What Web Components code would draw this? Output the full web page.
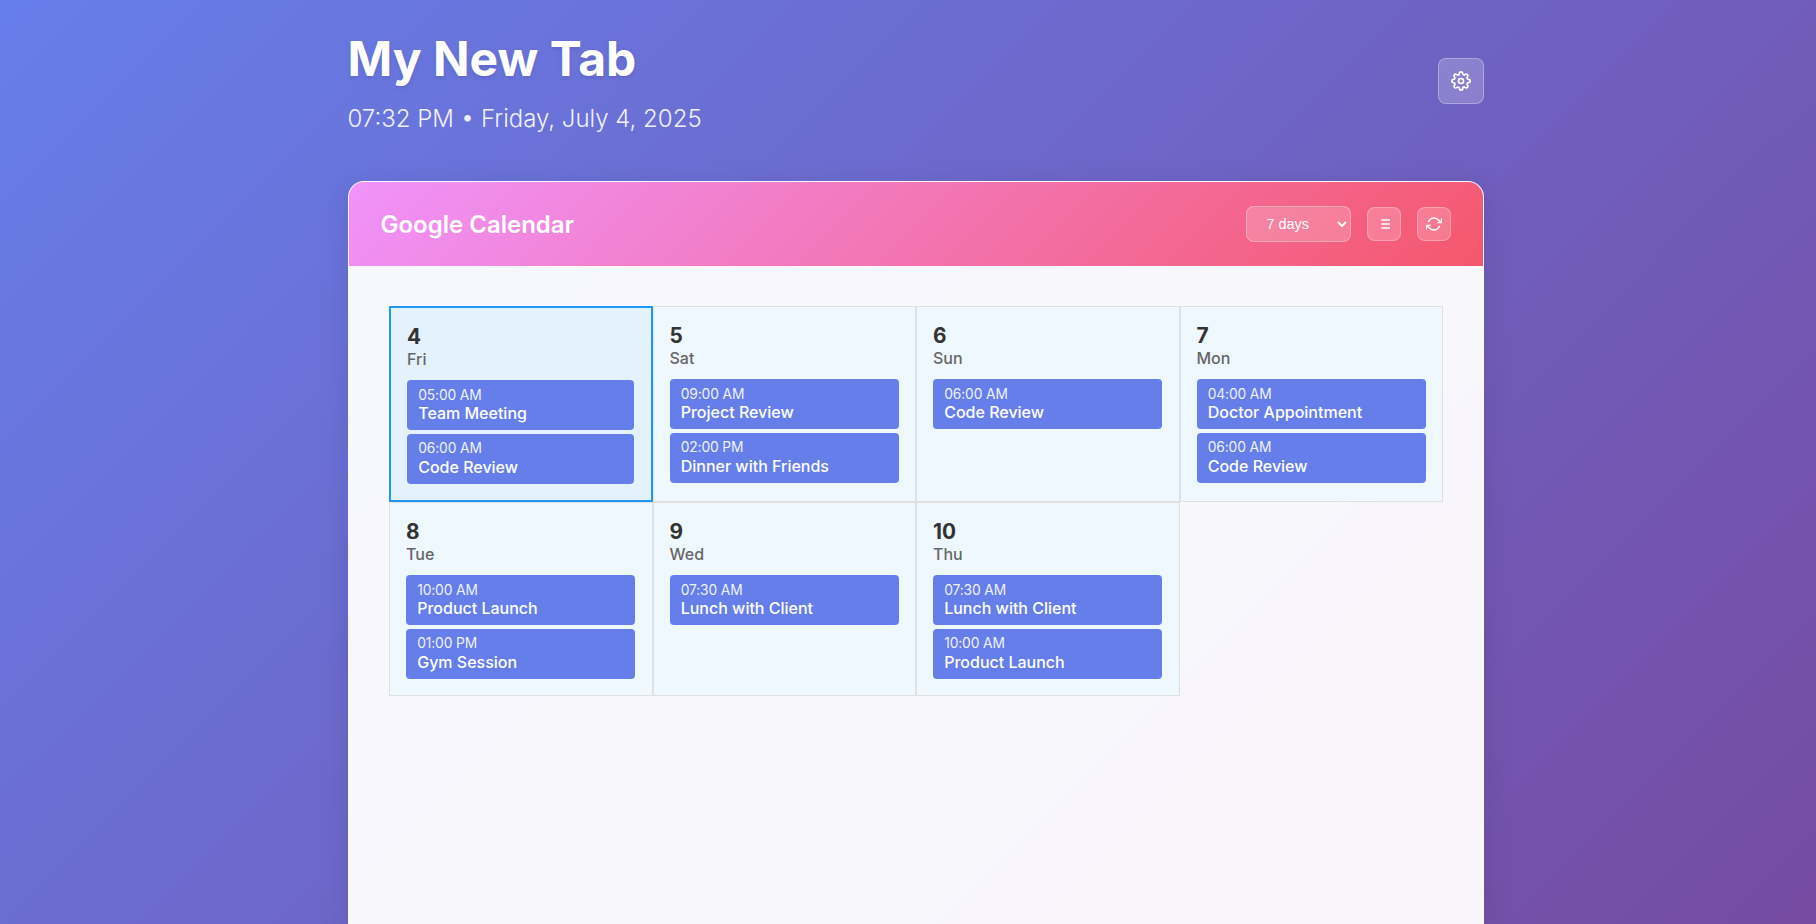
<!DOCTYPE html>
<html lang="en">
<head>
<meta charset="utf-8">
<title>My New Tab</title>
<style>
html{height:100%;background:linear-gradient(135deg,#667eea 0%,#764ba2 100%) fixed}
body{margin:0;height:100%;overflow:hidden;font-family:Inter,sans-serif;color:#333}
</style>
</head>
<body>
<new-tab-page></new-tab-page>
<script>
const define = (name, html, setup) => customElements.define(name, class extends HTMLElement {
  constructor() {
    super();
    const t = document.createElement('template');
    t.innerHTML = html;
    this.attachShadow({mode: 'open'}).append(t.content.cloneNode(true));
  }
  connectedCallback() { if (setup) setup.call(this, this.shadowRoot); }
});

define('icon-button', `
<style>
:host{display:flex;box-sizing:border-box;width:34px;height:34px;border:1px solid rgba(255,255,255,.3);border-radius:8px;background:rgba(255,255,255,.2);color:#fff;align-items:center;justify-content:center;cursor:pointer}
:host([large]){width:46px;height:46px}
</style>
<slot></slot>`);

define('page-header', `
<style>
:host{display:flex;justify-content:space-between;align-items:center;color:#fff}
h1{margin:0 0 16px;font-size:48px;line-height:58px;font-weight:700;text-shadow:0 2px 4px rgba(0,0,0,.1)}
p{margin:0;font-size:24px;line-height:29px;font-weight:300;opacity:.9}
icon-button{margin-bottom:2px}
svg{display:block}
</style>
<div><h1>My New Tab</h1><p>07:32 PM • Friday, July 4, 2025</p></div>
<icon-button large aria-label="Settings">
<svg width="20" height="20" viewBox="0 0 24 24" fill="none" stroke="#fff" stroke-width="2"><circle cx="12" cy="12" r="3"/><path d="M19.4 15a1.65 1.65 0 0 0 .33 1.82l.06.06a2 2 0 0 1 0 2.83 2 2 0 0 1-2.83 0l-.06-.06a1.65 1.65 0 0 0-1.82-.33 1.65 1.65 0 0 0-1 1.51V21a2 2 0 0 1-2 2 2 2 0 0 1-2-2v-.09A1.65 1.65 0 0 0 9 19.4a1.65 1.65 0 0 0-1.82.33l-.06.06a2 2 0 0 1-2.83 0 2 2 0 0 1 0-2.83l.06-.06a1.65 1.65 0 0 0 .33-1.82 1.65 1.65 0 0 0-1.51-1H3a2 2 0 0 1-2-2 2 2 0 0 1 2-2h.09A1.65 1.65 0 0 0 4.6 9a1.65 1.65 0 0 0-.33-1.82l-.06-.06a2 2 0 0 1 0-2.83 2 2 0 0 1 2.83 0l.06.06a1.65 1.65 0 0 0 1.82.33H9a1.65 1.65 0 0 0 1-1.51V3a2 2 0 0 1 2-2 2 2 0 0 1 2 2v.09a1.65 1.65 0 0 0 1 1.51 1.65 1.65 0 0 0 1.82-.33l.06-.06a2 2 0 0 1 2.83 0 2 2 0 0 1 0 2.83l-.06.06a1.65 1.65 0 0 0-.33 1.82V9a1.65 1.65 0 0 0 1.51 1H21a2 2 0 0 1 2 2 2 2 0 0 1-2 2h-.09a1.65 1.65 0 0 0-1.51 1z"/></svg>
</icon-button>`);

define('calendar-event', `
<style>
:host{display:block;box-sizing:border-box;height:49.8px;padding:6.2px 11.2px 0;border-radius:4px;background:#667eea;color:#fff}
.time{font-size:13.8px;line-height:16px;font-weight:400;letter-spacing:-.12px;opacity:.9;margin-bottom:.5px}
.title{font-size:16px;line-height:20px;font-weight:500}
</style>
<div class="time"></div><div class="title"><slot></slot></div>`,
function (root) { root.querySelector('.time').textContent = this.getAttribute('time'); });

define('calendar-day', `
<style>
:host{display:block;padding:16px;border:1px solid #e0e0e0;background:#f0f8ff}
:host([today]){border:2px solid #2196f3;background:#e3f2fd}
.num{font-size:20.8px;line-height:25px;font-weight:700;color:#333}
.name{font-size:16px;line-height:19px;font-weight:500;color:#666;margin:1px 0 11.4px}
.events{display:flex;flex-direction:column;gap:4px;margin-right:.1px}
</style>
<div class="num"></div><div class="name"></div><div class="events"><slot></slot></div>`,
function (root) {
  root.querySelector('.num').textContent = this.getAttribute('num');
  root.querySelector('.name').textContent = this.getAttribute('name');
});

define('calendar-toolbar', `
<style>
:host{display:flex;align-items:center;justify-content:space-between;padding:24px 32px;background:linear-gradient(135deg,#f093fb 0%,#f5576c 100%);color:#fff}
h2{margin:0;font-size:24px;line-height:29px;font-weight:600}
.controls{display:flex;align-items:center;gap:16px}
select{box-sizing:border-box;width:105px;height:36px;margin:0;padding:8px 0 8px 16px;border:1px solid rgba(255,255,255,.3);border-radius:8px;background:rgba(255,255,255,.2);color:#fff;font:14.4px "Liberation Sans",Arial,sans-serif}
svg{display:block}
</style>
<h2>Google Calendar</h2>
<div class="controls">
<select><option>7 days</option></select>
<icon-button aria-label="List view"><svg width="16" height="16" viewBox="0 0 24 24" fill="none" stroke="#fff" stroke-width="2"><path d="M8 6h13M8 12h13M8 18h13"/></svg></icon-button>
<icon-button aria-label="Refresh"><svg width="16" height="16" viewBox="0 0 24 24" fill="none" stroke="#fff" stroke-width="2"><path d="M23 4v6h-6M1 20v-6h6"/><path d="M3.51 9a9 9 0 0 1 14.85-3.36L23 10M1 14l4.64 4.36A9 9 0 0 0 20.49 15"/></svg></icon-button>
</div>`);

define('calendar-card', `
<style>
:host{display:block;box-sizing:border-box;height:743px;border:1px solid rgba(255,255,255,.2);border-bottom:0;border-radius:16px 16px 0 0;background:rgba(255,255,255,.95);box-shadow:0 8px 32px rgba(0,0,0,.1);overflow:hidden}
.grid{display:grid;grid-template-columns:repeat(4,1fr);padding:40px 39.5px 40px 40.5px}
</style>
<calendar-toolbar></calendar-toolbar>
<div class="grid"><slot></slot></div>`);

define('new-tab-page', `
<style>
:host{display:block;box-sizing:border-box;width:1136px;margin-left:347.5px;padding-top:30px}
page-header{margin-bottom:48px}
</style>
<page-header></page-header>
<calendar-card>
<calendar-day today num="4" name="Fri"><calendar-event time="05:00 AM">Team Meeting</calendar-event><calendar-event time="06:00 AM">Code Review</calendar-event></calendar-day>
<calendar-day num="5" name="Sat"><calendar-event time="09:00 AM">Project Review</calendar-event><calendar-event time="02:00 PM">Dinner with Friends</calendar-event></calendar-day>
<calendar-day num="6" name="Sun"><calendar-event time="06:00 AM">Code Review</calendar-event></calendar-day>
<calendar-day num="7" name="Mon"><calendar-event time="04:00 AM">Doctor Appointment</calendar-event><calendar-event time="06:00 AM">Code Review</calendar-event></calendar-day>
<calendar-day num="8" name="Tue"><calendar-event time="10:00 AM">Product Launch</calendar-event><calendar-event time="01:00 PM">Gym Session</calendar-event></calendar-day>
<calendar-day num="9" name="Wed"><calendar-event time="07:30 AM">Lunch with Client</calendar-event></calendar-day>
<calendar-day num="10" name="Thu"><calendar-event time="07:30 AM">Lunch with Client</calendar-event><calendar-event time="10:00 AM">Product Launch</calendar-event></calendar-day>
</calendar-card>`);
</script>
</body>
</html>
